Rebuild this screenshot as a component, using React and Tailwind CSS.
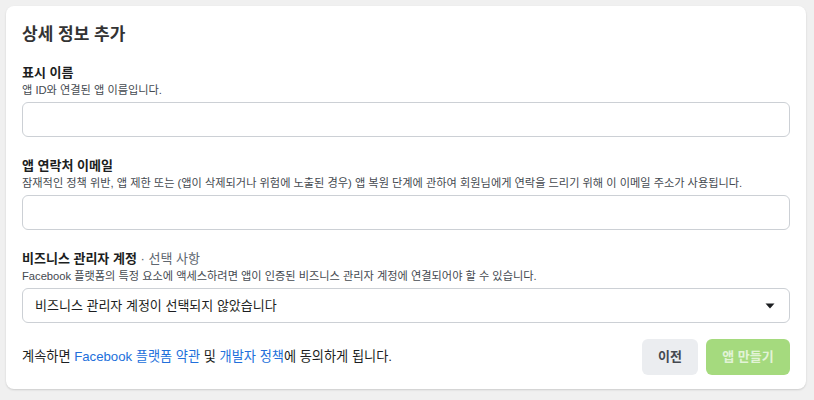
import React from 'react';

const font = { fontFamily: '"Liberation Sans", "Noto Sans CJK KR", sans-serif' };

function Field({ label, optional, description, children }) {
  return (
    <div className="flex flex-col">
      <div className="text-[13px] leading-[18px] font-bold text-[#1c1e21]">
        {label}
        {optional && <span className="font-normal text-[#606770]"> · {optional}</span>}
      </div>
      <div className="text-[11.2px] leading-[16px] text-[#444950] mb-[4px]">{description}</div>
      {children}
    </div>
  );
}

export default function App() {
  return (
    <div className="w-[814px] h-[400px] bg-[#f0f0f0] p-[6px] pr-[8px]" style={font}>
      <div className="bg-white rounded-[8px] h-[383px] shadow-[0_1px_2px_rgba(0,0,0,0.15)] px-4 pt-[18px]">
        <h1 className="text-[17px] leading-[22px] font-bold text-[#333] mb-[18px]">상세 정보 추가</h1>

        <div className="flex flex-col gap-[20px]">
          <Field label="표시 이름" description="앱 ID와 연결된 앱 이름입니다.">
            <input className="h-[35px] w-full rounded-[6px] border border-[#ccd0d5] outline-none px-3" />
          </Field>

          <Field
            label="앱 연락처 이메일"
            description="잠재적인 정책 위반, 앱 제한 또는 (앱이 삭제되거나 위험에 노출된 경우) 앱 복원 단계에 관하여 회원님에게 연락을 드리기 위해 이 이메일 주소가 사용됩니다."
          >
            <input className="h-[35px] w-full rounded-[6px] border border-[#ccd0d5] outline-none px-3" />
          </Field>

          <Field
            label="비즈니스 관리자 계정"
            optional="선택 사항"
            description="Facebook 플랫폼의 특정 요소에 액세스하려면 앱이 인증된 비즈니스 관리자 계정에 연결되어야 할 수 있습니다."
          >
            <div className="h-[35px] w-full rounded-[6px] border border-[#ccd0d5] px-3 flex items-center justify-between">
              <span className="text-[13px] text-[#1c1e21]">비즈니스 관리자 계정이 선택되지 않았습니다</span>
              <svg width="10" height="6" viewBox="0 0 10 6" className="mr-[2px]">
                <path d="M0.5 0.5 L9.5 0.5 L5 5.5 Z" fill="#1c1e21" />
              </svg>
            </div>
          </Field>
        </div>

        <div className="flex items-center justify-between mt-[16px]">
          <p className="text-[13.2px] text-[#1c1e21]">
            계속하면 <span className="text-[#216fdb]">Facebook 플랫폼 약관</span> 및{' '}
            <span className="text-[#216fdb]">개발자 정책</span>에 동의하게 됩니다.
          </p>
          <div className="flex gap-2">
            <button className="h-[36px] w-[56px] rounded-[6px] bg-[#ebedf0] text-[13px] font-bold text-[#444950]">이전</button>
            <button className="h-[36px] w-[84px] rounded-[6px] bg-[#a5da7e] text-[13px] font-bold text-white/70">앱 만들기</button>
          </div>
        </div>
      </div>
    </div>
  );
}
